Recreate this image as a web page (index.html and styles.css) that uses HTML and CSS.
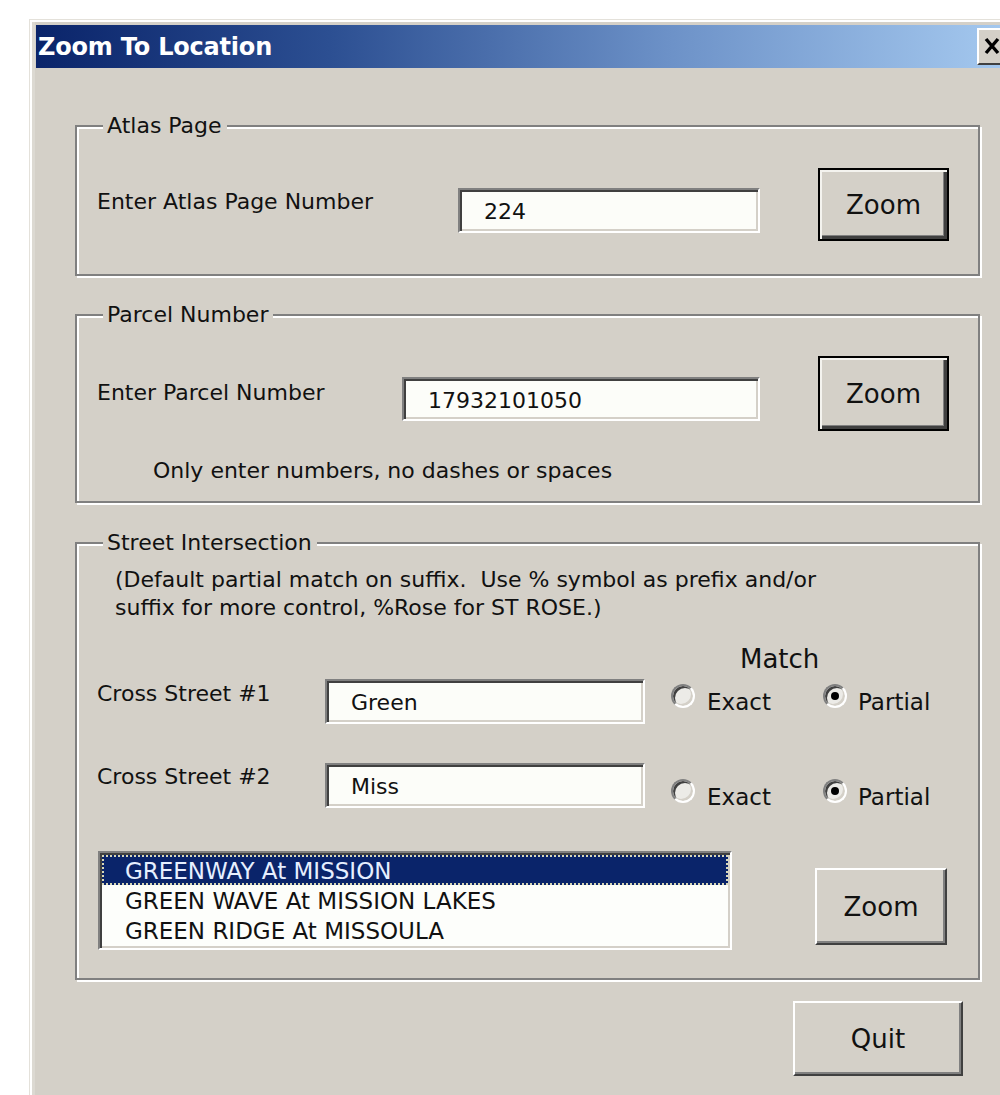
FILE: index.html
```html
<!DOCTYPE html>
<html lang="en">
<head>
<meta charset="utf-8">
<title>Zoom To Location</title>
<link rel="stylesheet" href="styles.css">
</head>
<body>
<div class="window">
  <div class="titlebar">
    <span class="title">Zoom To Location</span>
    <span class="close" aria-label="Close">
      <svg width="32" height="37" viewBox="0 0 32 37">
        <path d="M9 11 L21 25 M21 11 L9 25" stroke="#000" stroke-width="3.4" fill="none"/>
      </svg>
    </span>
  </div>

  <div class="client">
    <fieldset class="group group-atlas">
      <legend>Atlas Page</legend>
      <div class="row">
        <span class="lbl lbl-atlas">Enter Atlas Page Number</span>
        <div class="field field-atlas">224</div>
        <button class="btn btn-default btn-zoom">Zoom</button>
      </div>
    </fieldset>

    <fieldset class="group group-parcel">
      <legend>Parcel Number</legend>
      <div class="row">
        <span class="lbl lbl-parcel">Enter Parcel Number</span>
        <div class="field field-parcel">17932101050</div>
        <button class="btn btn-default btn-zoom">Zoom</button>
      </div>
      <p class="hint">Only enter numbers, no dashes or spaces</p>
    </fieldset>

    <fieldset class="group group-street">
      <legend>Street Intersection</legend>
      <p class="note">(Default partial match on suffix.&nbsp; Use % symbol as prefix and/or<br>suffix for more control, %Rose for ST ROSE.)</p>
      <div class="match-head">Match</div>

      <div class="row street-row street-row-1">
        <span class="lbl lbl-cross">Cross Street #1</span>
        <div class="field field-street">Green</div>
        <label class="opt opt-exact"><span class="radio"></span><span class="opt-text">Exact</span></label>
        <label class="opt opt-partial"><span class="radio checked"></span><span class="opt-text">Partial</span></label>
      </div>

      <div class="row street-row street-row-2">
        <span class="lbl lbl-cross">Cross Street #2</span>
        <div class="field field-street">Miss</div>
        <label class="opt opt-exact"><span class="radio"></span><span class="opt-text">Exact</span></label>
        <label class="opt opt-partial"><span class="radio checked"></span><span class="opt-text">Partial</span></label>
      </div>

      <div class="row list-row">
        <ul class="listbox">
          <li class="item selected">GREENWAY At MISSION</li>
          <li class="item">GREEN WAVE At MISSION LAKES</li>
          <li class="item">GREEN RIDGE At MISSOULA</li>
        </ul>
        <button class="btn btn-zoom btn-list">Zoom</button>
      </div>
    </fieldset>

    <button class="btn btn-quit">Quit</button>
  </div>
</div>
</body>
</html>
```

FILE: styles.css
```css
html, body {
  margin: 0;
  padding: 0;
}

body {
  width: 1000px;
  height: 1095px;
  overflow: hidden;
  background: #ffffff;
  font-family: "DejaVu Sans", "Liberation Sans", sans-serif;
  color: #111;
}

/* ---------- window frame ---------- */
.window {
  box-sizing: border-box;
  margin: 19px 0 0 29px;
  width: 990px;
  height: 1100px;
  padding: 5px 4px 0 6px;
  background: #d4d0c8;
  border-top: 1px solid #e4e1da;
  border-left: 1px solid #e4e1da;
  box-shadow: inset 2px 2px 0 #ffffff, inset 5px 0 0 #dcd9d2;
}

.titlebar {
  display: flex;
  align-items: center;
  height: 43px;
  padding-left: 2px;
  background: linear-gradient(to right, #0a246a 0%, #2c4f92 30%, #6d92c8 65%, #a6caf0 100%);
}

.title {
  color: #ffffff;
  font-weight: bold;
  font-size: 24px;
  letter-spacing: -0.2px;
}

.close {
  margin-left: auto;
  margin-right: 6px;
  width: 32px;
  height: 37px;
  box-sizing: border-box;
  background: #d4d0c8;
  border-top: 2px solid #ffffff;
  border-left: 2px solid #ffffff;
  border-bottom: 2px solid #404040;
  border-right: 2px solid #404040;
  display: flex;
  align-items: center;
  justify-content: center;
  overflow: hidden;
}

.close svg {
  display: block;
  flex: none;
}

/* ---------- client area ---------- */
.client {
  padding: 45px 0 0 39px;
}

.group {
  box-sizing: border-box;
  width: 905px;
  margin: 0;
  padding: 0;
  min-width: 0;
  border: 2px solid #808080;
  box-shadow: inset 2px 2px 0 #ffffff, 2px 2px 0 #ffffff;
}

.group legend {
  margin-left: 26px;
  padding: 0 5px 0 4px;
  font-size: 22px;
  line-height: 26px;
  background: #d4d0c8;
}

.row {
  display: flex;
  align-items: flex-start;
}

.lbl {
  font-size: 22px;
  line-height: 26px;
  white-space: nowrap;
}

/* sunken edit box */
.field {
  box-sizing: border-box;
  background: #fcfdf9;
  border-top: 2px solid #808080;
  border-left: 2px solid #808080;
  border-bottom: 2px solid #ffffff;
  border-right: 2px solid #ffffff;
  box-shadow: inset 2px 2px 0 #404040, inset -2px -2px 0 #d4d0c8;
  font-size: 22px;
  line-height: 26px;
  padding: 9px 0 0 24px;
  white-space: nowrap;
}

/* raised push button */
.btn {
  box-sizing: border-box;
  background: #d4d0c8;
  font-family: "DejaVu Sans", "Liberation Sans", sans-serif;
  font-size: 26px;
  color: #111;
  border-top: 2px solid #ffffff;
  border-left: 2px solid #ffffff;
  border-bottom: 2px solid #404040;
  border-right: 2px solid #404040;
  box-shadow: inset -2px -2px 0 #808080;
  padding: 0;
  margin: 0;
}

.btn-default {
  border: 2px solid #000000;
  box-shadow: inset 2px 2px 0 #f4f3ef, inset -3px -3px 0 #404040, inset -4px -4px 0 #808080;
}

/* ---------- Atlas Page ---------- */
.group-atlas .row {
  margin: 29px 0 33px 20px;
}

.lbl-atlas {
  width: 361px;
  margin-top: 21px;
}

.field-atlas {
  width: 302px;
  height: 45px;
  margin-top: 20px;
}

.btn-zoom {
  width: 131px;
  height: 73px;
  margin-left: 58px;
}

/* ---------- Parcel Number ---------- */
.group-parcel {
  margin-top: 26px;
}

.group-parcel .row {
  margin: 28px 0 0 20px;
}

.lbl-parcel {
  width: 305px;
  margin-top: 24px;
}

.field-parcel {
  width: 358px;
  height: 44px;
  margin-top: 21px;
}

.group-parcel .btn-zoom {
  height: 75px;
}

.hint {
  margin: 27px 0 17px 76px;
  font-size: 22px;
  line-height: 26px;
}

/* ---------- Street Intersection ---------- */
.group-street {
  margin-top: 27px;
}

.note {
  margin: 10px 0 0 38px;
  font-size: 22px;
  line-height: 28px;
  white-space: nowrap;
}

.match-head {
  margin: 22px 0 0 663px;
  font-size: 26px;
  line-height: 30px;
}

.street-row {
  margin-left: 20px;
}

.street-row-1 {
  margin-top: 5px;
}

.street-row-2 {
  margin-top: 39px;
}

.lbl-cross {
  width: 228px;
  margin-top: 2px;
}

.field-street {
  width: 320px;
  height: 45px;
}

.opt {
  display: flex;
  align-items: flex-start;
  font-size: 23px;
  line-height: 26px;
}

.opt-exact {
  width: 152px;
  margin-left: 26px;
}

.opt-text {
  margin-left: 12px;
}

.opt-partial .opt-text {
  margin-left: 11px;
}

.street-row-1 .radio {
  margin-top: 5px;
}

.street-row-1 .opt-text {
  margin-top: 10px;
}

.street-row-2 .lbl-cross {
  margin-top: 1px;
}

.street-row-2 .radio {
  margin-top: 16px;
}

.street-row-2 .opt-text {
  margin-top: 21px;
}

/* classic round option button */
.radio {
  position: relative;
  flex: none;
  box-sizing: border-box;
  width: 24px;
  height: 24px;
  border-radius: 50%;
  background: #ecebe7;
  border: 2px solid;
  border-color: #808080 #ffffff #ffffff #808080;
  box-shadow: inset 2px 2px 0 #404040, inset -2px -2px 0 #d4d0c8;
}

.radio.checked::after {
  content: "";
  position: absolute;
  left: 6px;
  top: 6px;
  width: 8px;
  height: 8px;
  border-radius: 50%;
  background: #000000;
}

/* list box with results */
.list-row {
  margin: 41px 0 28px 21px;
}

.listbox {
  box-sizing: border-box;
  width: 634px;
  height: 99px;
  margin: 0;
  padding: 0;
  list-style: none;
  background: #fdfefb;
  border-top: 2px solid #808080;
  border-left: 2px solid #808080;
  border-bottom: 2px solid #ffffff;
  border-right: 2px solid #ffffff;
  box-shadow: inset 2px 2px 0 #404040, inset -2px -2px 0 #d4d0c8;
  overflow: hidden;
}

.item {
  height: 30px;
  box-sizing: border-box;
  padding: 3px 0 0 23px;
  font-size: 23px;
  line-height: 26px;
  white-space: nowrap;
  margin: 0 2px;
}

.item.selected {
  margin-top: 2px;
  background: #0a246a;
  color: #e6efff;
  outline: 2px dotted #d8d8b8;
  outline-offset: -2px;
}

.btn-list {
  width: 132px;
  height: 77px;
  margin-top: 17px;
  margin-left: 83px;
}

/* ---------- bottom ---------- */
.btn-quit {
  display: block;
  width: 170px;
  height: 75px;
  margin: 21px 0 0 718px;
}
```
